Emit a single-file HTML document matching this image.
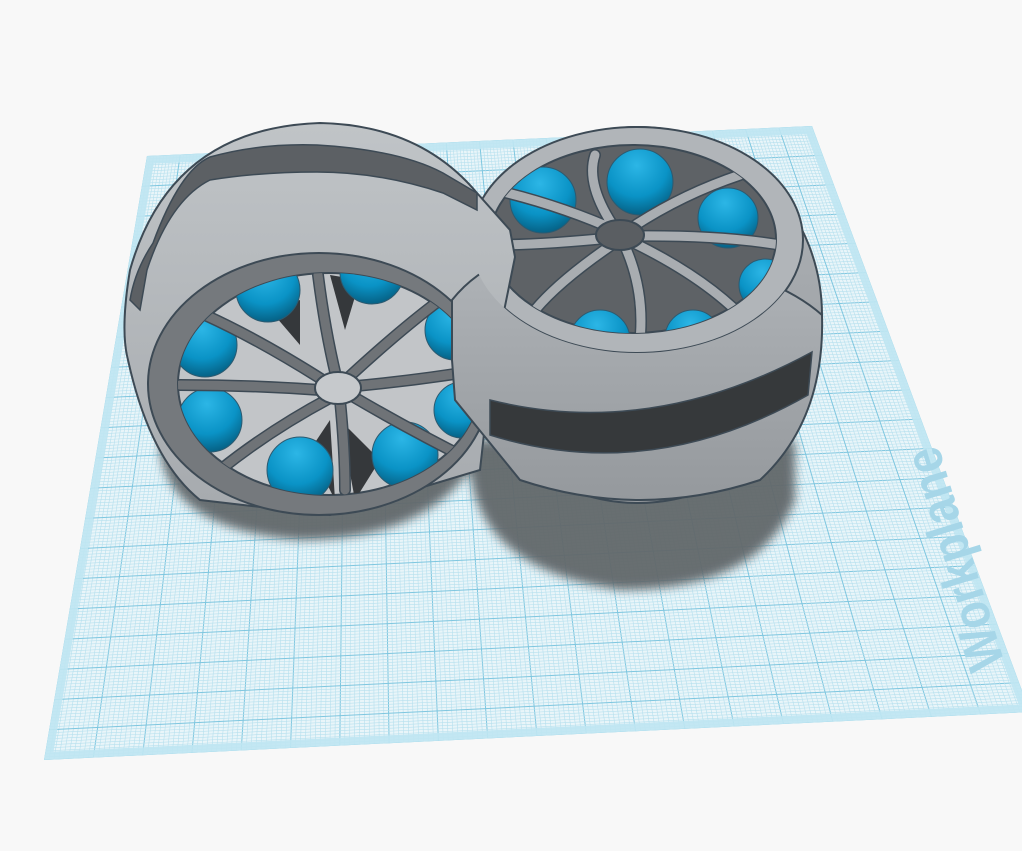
<!DOCTYPE html>
<html><head><meta charset="utf-8"><style>
html,body{margin:0;padding:0;background:#f8f8f8;width:1022px;height:851px;overflow:hidden}
svg{display:block}
</style></head><body>
<svg id="s" width="1022" height="851" viewBox="0 0 1022 851" xmlns="http://www.w3.org/2000/svg">
<defs>
<clipPath id="wp"><polygon points="147,156 812,126 1030,712 44,760"/></clipPath>
<clipPath id="inL"><ellipse cx="329" cy="384" rx="151" ry="111"/></clipPath>
<clipPath id="inR"><ellipse cx="633" cy="239" rx="143" ry="94"/></clipPath>
<mask id="shellMask"><rect width="1022" height="851" fill="#fff"/><ellipse cx="637" cy="240" rx="166" ry="113" fill="#000"/></mask>
<radialGradient id="ball" cx="0.45" cy="0.25" r="0.85"><stop offset="0" stop-color="#2cb6e6"/><stop offset="0.55" stop-color="#0a93c6"/><stop offset="1" stop-color="#04506f"/></radialGradient>
<linearGradient id="shL" x1="0" y1="0" x2="0" y2="1"><stop offset="0" stop-color="#c0c4c7"/><stop offset="1" stop-color="#a6aaae"/></linearGradient>
<linearGradient id="shR" x1="0" y1="0" x2="0" y2="1"><stop offset="0" stop-color="#b0b4b8"/><stop offset="1" stop-color="#95999d"/></linearGradient>
<filter id="bl"><feGaussianBlur stdDeviation="5"/></filter>
</defs>
<polygon points="147,156 812,126 1030,712 44,760" fill="#e9f5f9"/>
<g id="grid" clip-path="url(#wp)" fill="none"></g>
<polygon points="147,156 812,126 1030,712 44,760" fill="none" stroke="#bfe5f2" stroke-width="16" clip-path="url(#wp)" opacity="0.9"/>
<text x="0" y="0" transform="translate(1005,664) rotate(-107)" font-family="Liberation Sans, sans-serif" font-weight="bold" font-size="52" textLength="230" lengthAdjust="spacingAndGlyphs" fill="#a6d6e8">Workplane</text>
<g filter="url(#bl)" fill="#62676b" opacity="0.95">
<path d="M160,450 Q170,530 300,540 Q420,540 470,470 L470,440 L160,440Z"/>
<path d="M470,470 Q480,570 620,590 Q760,590 795,500 L795,440 L470,440Z"/>
</g>
<ellipse cx="638" cy="315" rx="184" ry="188" fill="url(#shR)" stroke="#3d4a55" stroke-width="2"/>
<ellipse cx="637" cy="240" rx="166" ry="113" fill="#b1b5b9" stroke="#3d4a55" stroke-width="2"/>
<ellipse cx="633" cy="239" rx="143" ry="94" fill="#5e6266" stroke="#3d4a55" stroke-width="2"/>
<g clip-path="url(#inR)">
<g fill="url(#ball)" stroke="#2d5a70" stroke-width="1">
<circle cx="543" cy="200" r="33"/><circle cx="640" cy="182" r="33"/><circle cx="728" cy="218" r="30"/><circle cx="765" cy="285" r="26"/><circle cx="600" cy="340" r="30"/><circle cx="693" cy="338" r="28"/>
</g>
<g stroke="#3d4a55" stroke-width="12" fill="none" stroke-linecap="round">
<path d="M620,232 Q560,205 495,190"/><path d="M616,230 Q585,185 595,155"/><path d="M628,230 Q680,195 740,175"/><path d="M632,236 Q720,235 780,245"/><path d="M632,242 Q710,280 750,325"/><path d="M624,244 Q645,290 640,340"/><path d="M616,242 Q560,280 535,310"/><path d="M610,238 Q540,245 490,245"/>
</g>
<g stroke="#a9adb1" stroke-width="9" fill="none" stroke-linecap="round">
<path d="M620,232 Q560,205 495,190"/><path d="M616,230 Q585,185 595,155"/><path d="M628,230 Q680,195 740,175"/><path d="M632,236 Q720,235 780,245"/><path d="M632,242 Q710,280 750,325"/><path d="M624,244 Q645,290 640,340"/><path d="M616,242 Q560,280 535,310"/><path d="M610,238 Q540,245 490,245"/>
</g>
</g>
<ellipse cx="620" cy="235" rx="24" ry="15" fill="#5a5e62" stroke="#3d4a55" stroke-width="2"/>
<path d="M515,257 L510,230 L477,193 Q420,125 320,123 Q170,128 130,270 Q120,330 128,360 Q150,460 200,500 L330,515 L480,470 L490,380 Z" fill="url(#shL)" stroke="#3d4a55" stroke-width="2"/>
<path d="M153,243 Q180,170 210,157 Q260,143 317,145 Q400,150 443,173 L477,193 L477,210 L443,193 Q380,172 317,172 Q260,172 210,180 Q170,200 147,270 L140,310 L130,300 Q135,270 153,243Z" fill="#5c6064" stroke="#3d4a55" stroke-width="1.5"/>
<ellipse cx="319" cy="384" rx="171" ry="131" fill="#75797d" stroke="#3d4a55" stroke-width="2"/>
<ellipse cx="329" cy="384" rx="151" ry="111" fill="#c2c5c8" stroke="#3d4a55" stroke-width="2"/>
<g clip-path="url(#inL)">
<g fill="#35383b"><path d="M270,310 L300,300 L300,345 Z"/><path d="M330,275 L345,330 L360,280Z"/><path d="M340,420 L355,500 L380,460Z"/><path d="M310,450 L330,420 L335,500Z"/></g>
<g fill="url(#ball)" stroke="#2d5a70" stroke-width="1">
<circle cx="268" cy="290" r="32"/><circle cx="372" cy="272" r="32"/><circle cx="205" cy="345" r="32"/><circle cx="455" cy="330" r="30"/><circle cx="210" cy="420" r="32"/><circle cx="300" cy="470" r="33"/><circle cx="405" cy="455" r="33"/><circle cx="462" cy="410" r="28"/>
</g>
<g stroke="#3d4a55" stroke-width="12" fill="none" stroke-linecap="round">
<path d="M326,382 Q260,340 205,315"/><path d="M336,376 Q325,330 318,275"/><path d="M350,376 Q400,330 440,300"/><path d="M356,386 Q420,380 480,370"/><path d="M352,396 Q410,430 470,460"/><path d="M340,400 Q345,450 345,490"/><path d="M330,398 Q270,430 220,470"/><path d="M320,390 Q250,385 180,385"/>
</g>
<g stroke="#6f7377" stroke-width="9" fill="none" stroke-linecap="round">
<path d="M326,382 Q260,340 205,315"/><path d="M336,376 Q325,330 318,275"/><path d="M350,376 Q400,330 440,300"/><path d="M356,386 Q420,380 480,370"/><path d="M352,396 Q410,430 470,460"/><path d="M340,400 Q345,450 345,490"/><path d="M330,398 Q270,430 220,470"/><path d="M320,390 Q250,385 180,385"/>
</g>
</g>
<ellipse cx="338" cy="388" rx="23" ry="16" fill="#c6c9cc" stroke="#3d4a55" stroke-width="2"/>
<g mask="url(#shellMask)">
<path d="M452,300 Q500,240 600,250 Q760,260 822,315 Q825,420 760,480 Q640,520 520,480 L455,400 L452,360 Z" fill="url(#shR)" stroke="#3d4a55" stroke-width="2"/>
</g>
<path d="M490,400 Q650,440 812,352 L808,395 Q650,485 490,435Z" fill="#36393b" stroke="#3d4a55" stroke-width="1.5"/>
</svg>
<script>
(function(){
var g=document.getElementById('grid');var ns='http://www.w3.org/2000/svg';
var A=[147,156],B=[812,126],C=[1030,712],D=[44,760];
function L(p,q,t){return[p[0]+(q[0]-p[0])*t,p[1]+(q[1]-p[1])*t]}
var N=200;
for(var i=0;i<=N;i++){var t=i/N;var maj=(i%10==0);
 var p=L(A,B,t),q=L(D,C,t);add(p,q,maj);
 p=L(A,D,t);q=L(B,C,t);add(p,q,maj);}
function add(p,q,maj){var l=document.createElementNS(ns,'line');l.setAttribute('x1',p[0]);l.setAttribute('y1',p[1]);l.setAttribute('x2',q[0]);l.setAttribute('y2',q[1]);l.setAttribute('stroke',maj?'#7ec6df':'#b6e0ee');l.setAttribute('stroke-width',maj?1:0.6);g.appendChild(l);}
})();
</script>
</body></html>
